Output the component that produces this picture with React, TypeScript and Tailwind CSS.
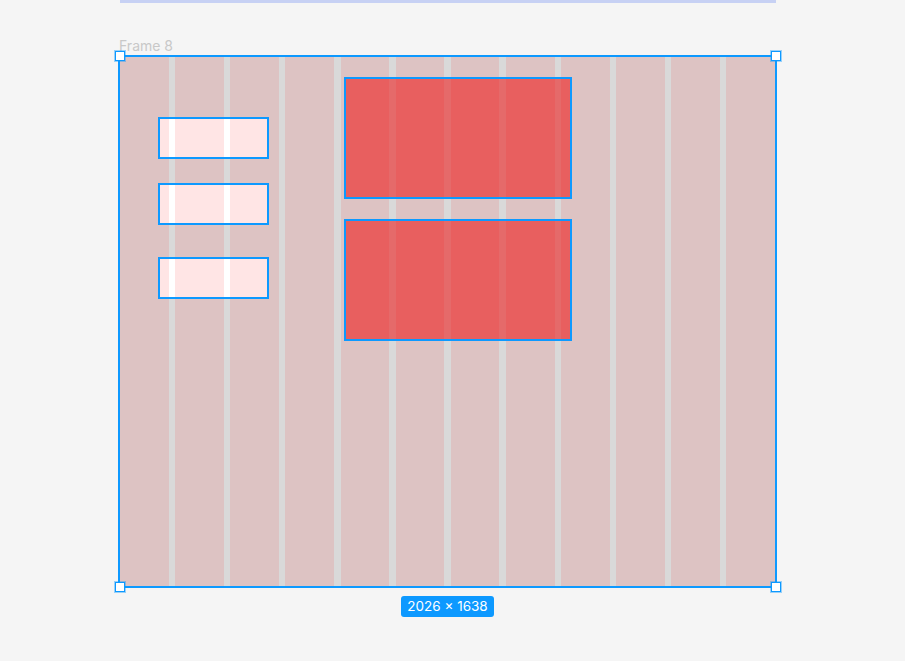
const BOXES = [
  { left: 38, top: 60, w: 111, h: 42, fill: 'bg-white' },
  { left: 38, top: 126, w: 111, h: 42, fill: 'bg-white' },
  { left: 38, top: 200, w: 111, h: 42, fill: 'bg-white' },
  { left: 224, top: 20, w: 228, h: 122, fill: 'bg-[#e56a6a]' },
  { left: 224, top: 162, w: 228, h: 122, fill: 'bg-[#e56a6a]' },
]

const HANDLES = [
  'left-[-5px] top-[-6px]',
  'right-[-6px] top-[-6px]',
  'left-[-5px] bottom-[-6px]',
  'right-[-6px] bottom-[-6px]',
]

function Handle({ pos }: { pos: string }) {
  return (
    <div className={`absolute ${pos} w-[10px] h-[10px] bg-white border border-[#0d99ff] ring-1 ring-[#0d99ff]/40 z-30`} />
  )
}

export default function App() {
  return (
    <div
      className="w-full h-[661px] bg-[#f5f5f5] overflow-hidden pl-[118px]"
      style={{ fontFamily: 'Inter, "Noto Sans", sans-serif' }}
    >
      {/* bottom edge of the frame above */}
      <div className="ml-[2px] w-[656px] h-[3px] bg-[#c7d1f4]" />

      <p className="mt-[35px] ml-[1px] text-[14px] leading-4 text-[#c8c8c8]">Frame 8</p>

      {/* selected frame */}
      <div className="mt-[1px] relative w-[659px] h-[533px] border-2 border-[#0d99ff] bg-[#d9d9d9]">
        {/* children fills */}
        {BOXES.map((b, i) => (
          <div
            key={i}
            className={`absolute ${b.fill}`}
            style={{ left: b.left, top: b.top, width: b.w, height: b.h }}
          />
        ))}

        {/* layout grid, 12 columns */}
        <div className="absolute inset-0 grid grid-cols-12 gap-x-[6.5px] pointer-events-none z-10">
          {Array.from({ length: 12 }).map((_, i) => (
            <div key={i} className="bg-[#ff0000]/10" />
          ))}
        </div>

        {/* selection outlines */}
        {BOXES.map((b, i) => (
          <div
            key={i}
            className="absolute border-2 border-[#0d99ff] z-20"
            style={{ left: b.left, top: b.top, width: b.w, height: b.h }}
          />
        ))}

        {HANDLES.map((p) => (
          <Handle key={p} pos={p} />
        ))}
      </div>

      <div className="w-[659px] flex justify-center mt-[8px]">
        <span className="h-[21px] px-[6px] flex items-center rounded-[3px] bg-[#0d99ff] text-white text-[13.5px] leading-none">
          2026 × 1638
        </span>
      </div>
    </div>
  )
}
